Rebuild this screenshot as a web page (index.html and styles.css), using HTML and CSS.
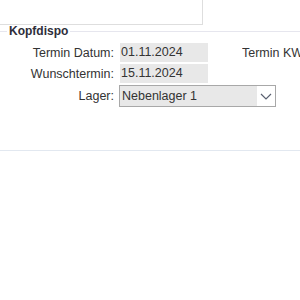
FILE: index.html
```html
<!DOCTYPE html>
<html lang="de">
<head>
<meta charset="utf-8">
<link rel="stylesheet" href="styles.css">
</head>
<body>
<div class="topbox"></div>
<section class="group">
  <div class="legend-row">
    <span class="line short"></span>
    <span class="legend">Kopfdispo</span>
    <span class="line"></span>
  </div>
  <div class="form">
    <label class="lbl">Termin Datum:</label>
    <div class="field">01.11.2024</div>
    <div class="lbl2">Termin KW</div>
    <label class="lbl">Wunschtermin:</label>
    <div class="field">15.11.2024</div>
    <div></div>
    <label class="lbl">Lager:</label>
    <div class="select">
      <span class="sel-text">Nebenlager 1</span>
      <span class="sel-btn">
        <svg width="12" height="7" viewBox="0 0 12 7"><path d="M1 1 L6 6 L11 1" fill="none" stroke="#5a6070" stroke-width="1.2"/></svg>
      </span>
    </div>
    <div></div>
  </div>
</section>
</body>
</html>
```
FILE: styles.css
```css
html, body {
  margin: 0;
  padding: 0;
  background: #fff;
}
body {
  font-family: "Liberation Sans", Arial, sans-serif;
  font-size: 12.5px;
  color: #333;
  width: 300px;
  height: 300px;
  overflow: hidden;
}
.topbox {
  width: 203px;
  height: 25px;
  border-right: 1px solid #dedede;
  border-bottom: 1px solid #dedede;
  box-sizing: border-box;
}
.group {
  border-bottom: 1px solid #e2e8f0;
  height: 126px;
  box-sizing: border-box;
}
.legend-row {
  display: flex;
  align-items: center;
  height: 12px;
}
.line {
  flex: 1;
  height: 1px;
  background: #e6e6ee;
}
.line.short {
  flex: 0 0 7px;
}
.legend {
  font-weight: bold;
  font-size: 12px;
  line-height: 12px;
  padding: 0 2px;
  color: #2e2e3a;
}
.form {
  display: grid;
  grid-template-columns: 114px 88px auto;
  column-gap: 6px;
  grid-template-rows: 19px 19px 22px;
  row-gap: 2px;
  margin-top: 6px;
  align-items: center;
}
.lbl {
  text-align: right;
  white-space: nowrap;
}
.lbl2 {
  margin-left: 28px;
  white-space: nowrap;
  overflow: hidden;
}
.field {
  background: #e8e8e8;
  height: 19px;
  line-height: 19px;
  padding-left: 1px;
  box-sizing: border-box;
}
.select {
  grid-column: 2 / span 2;
  width: 157px;
  height: 22px;
  margin-left: -1px;
  border: 1px solid #a8a8a8;
  box-sizing: border-box;
  display: flex;
  background: #fff;
}
.sel-text {
  flex: 1;
  background: #e8e8e8;
  line-height: 20px;
  padding-left: 2px;
}
.sel-btn {
  width: 18px;
  display: flex;
  align-items: center;
  justify-content: center;
}
```
